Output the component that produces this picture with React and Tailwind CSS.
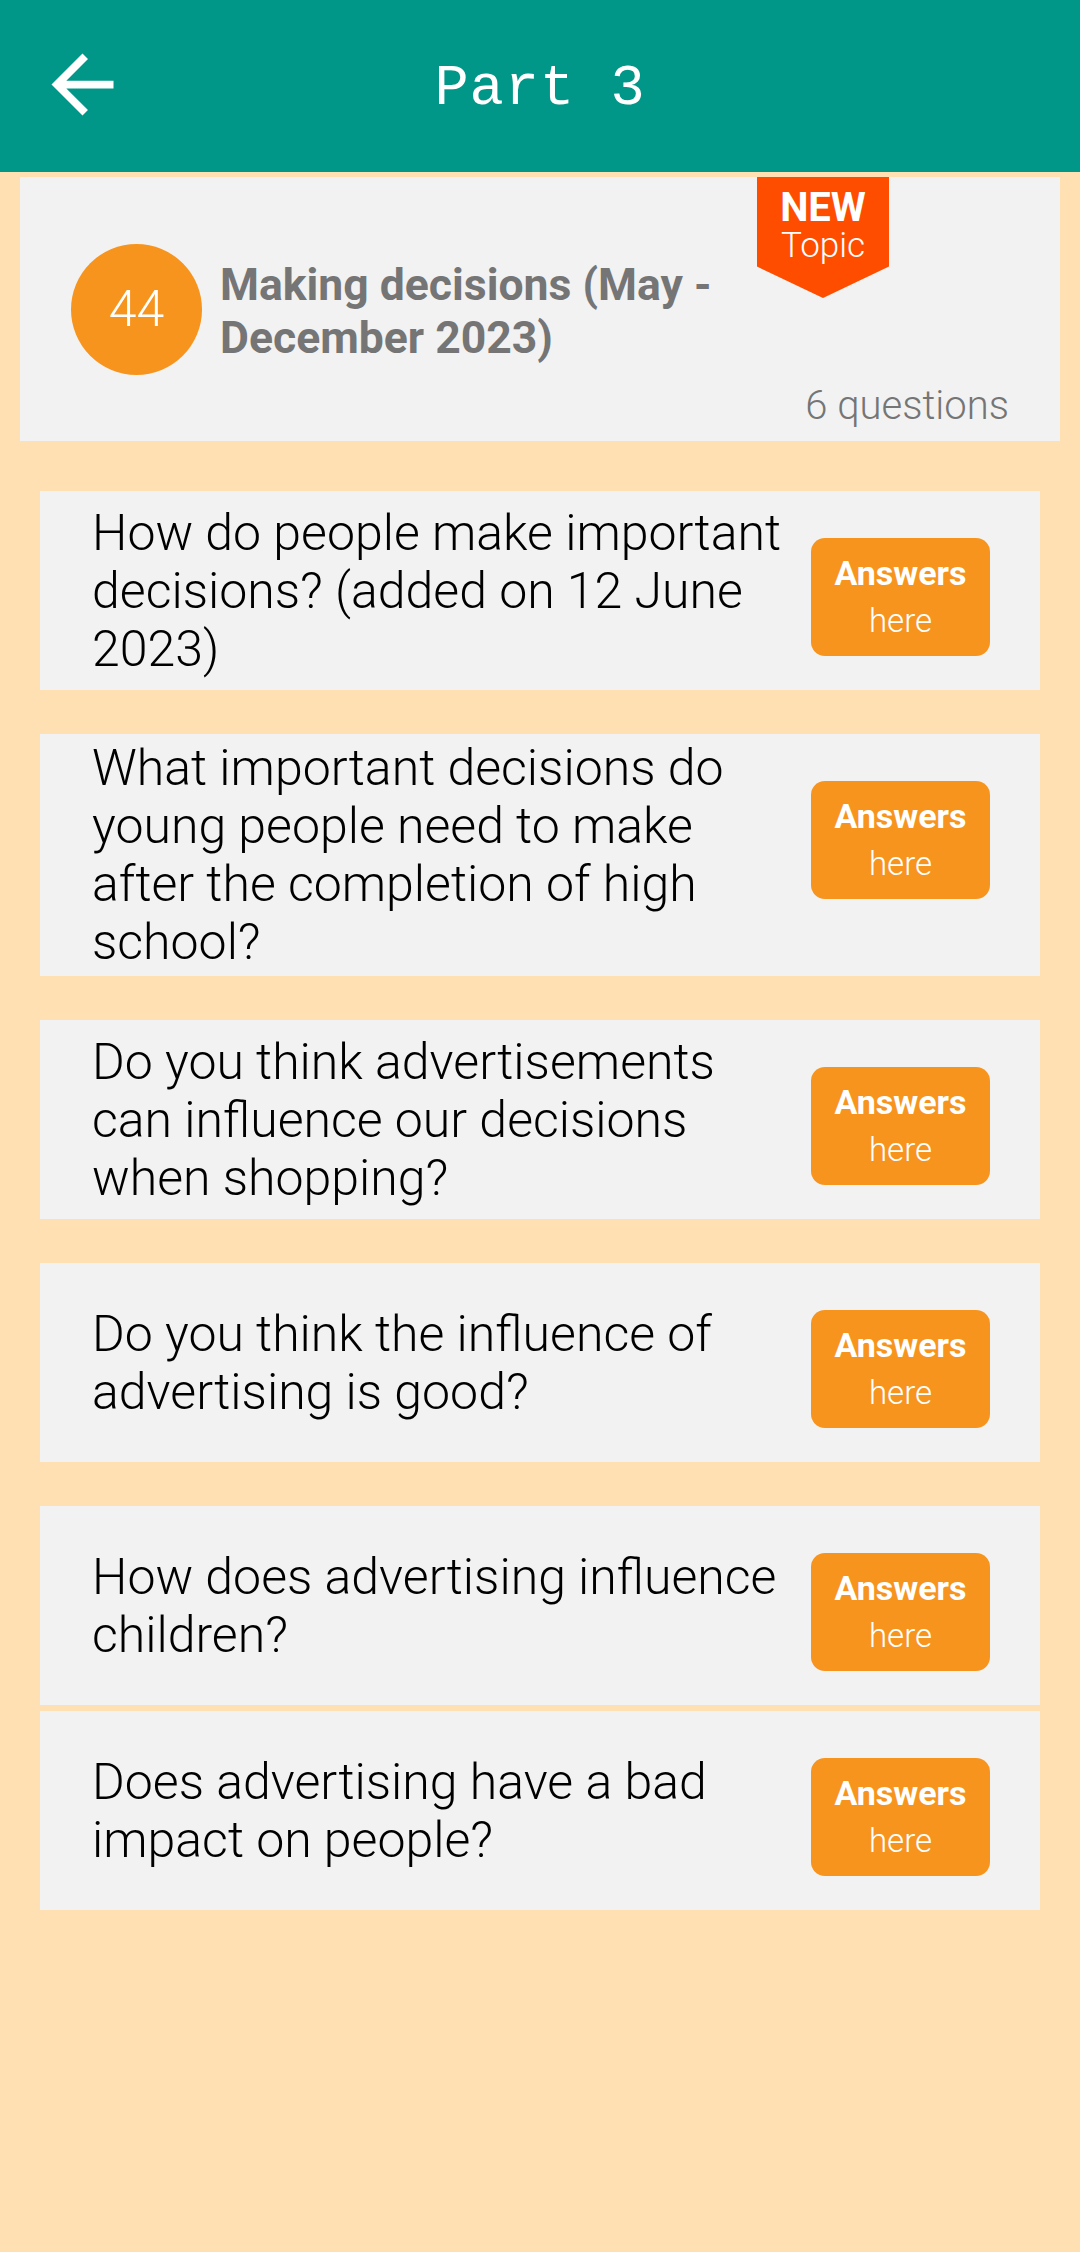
import React from "react";

const questions = [
  "How do people make important decisions? (added on 12 June 2023)",
  "What important decisions do young people need to make after the completion of high school?",
  "Do you think advertisements can influence our decisions when shopping?",
  "Do you think the influence of advertising is good?",
  "How does advertising influence children?",
  "Does advertising have a bad impact on people?",
];

function BackArrow() {
  return (
    <svg viewBox="0 0 24 24" className="w-[93px] h-[93px]" fill="white">
      <path d="M20 11H7.83l5.59-5.59L12 4l-8 8 8 8 1.41-1.41L7.83 13H20v-2z" />
    </svg>
  );
}

function QuestionCard({ text }) {
  return (
    <div className="flex items-center min-h-[199px] py-[5px] pl-[52px] pr-[50px] bg-[#f2f2f2]">
      <p className="w-[695px] mr-[24px] text-[50px] leading-[58px] font-light text-black">
        {text}
      </p>
      <button className="self-start mt-[42px] w-[179px] h-[118px] rounded-[14px] bg-[#f7941e] text-white flex flex-col items-center justify-center">
        <span className="text-[34px] leading-[47px] font-bold">Answers</span>
        <span className="text-[33px] leading-[47px] font-light">here</span>
      </button>
    </div>
  );
}

export default function App() {
  return (
    <div
      className="min-h-[2252px] w-[1080px] bg-[#ffe0b2]"
      style={{ fontFamily: "Roboto, 'Noto Sans', sans-serif" }}
    >
      <header className="relative h-[172px] bg-[#009688] flex items-center justify-center">
        <button className="absolute left-[36px] top-[38px]">
          <BackArrow />
        </button>
        <h1
          className="mt-[6px] text-white text-[57px] leading-none tracking-[1px]"
          style={{ fontFamily: "'Liberation Mono', monospace" }}
        >
          Part 3
        </h1>
      </header>

      <div className="relative mt-[5px] mx-[20px] h-[264px] bg-[#f2f2f2] flex items-center pl-[51px]">
        <div className="w-[131px] h-[131px] rounded-full bg-[#f7941e] flex items-center justify-center text-white text-[50px] font-light shrink-0">
          44
        </div>
        <h2 className="ml-[18px] mt-[6px] max-w-[520px] text-[44.5px] leading-[53px] font-bold text-[#757575]">
          Making decisions (May - December 2023)
        </h2>
        <div className="absolute top-0 left-[737px] w-[132px] h-[121px] bg-[#ff4d00] [clip-path:polygon(0_0,100%_0,100%_74%,50%_100%,0_74%)] flex flex-col items-center text-white">
          <span className="mt-[12px] text-[40px] leading-[38px] font-bold">NEW</span>
          <span className="text-[35px] leading-[38px] font-light">Topic</span>
        </div>
        <span className="absolute right-[51px] bottom-[5px] text-[40px] font-light text-[#757575]">
          6 questions
        </span>
      </div>

      <div className="mt-[50px] mx-[40px] flex flex-col">
        {questions.map((q, i) => (
          <div key={i} className={i === 0 ? "" : i === 5 ? "mt-[6px]" : "mt-[44px]"}>
            <QuestionCard text={q} />
          </div>
        ))}
      </div>
    </div>
  );
}
